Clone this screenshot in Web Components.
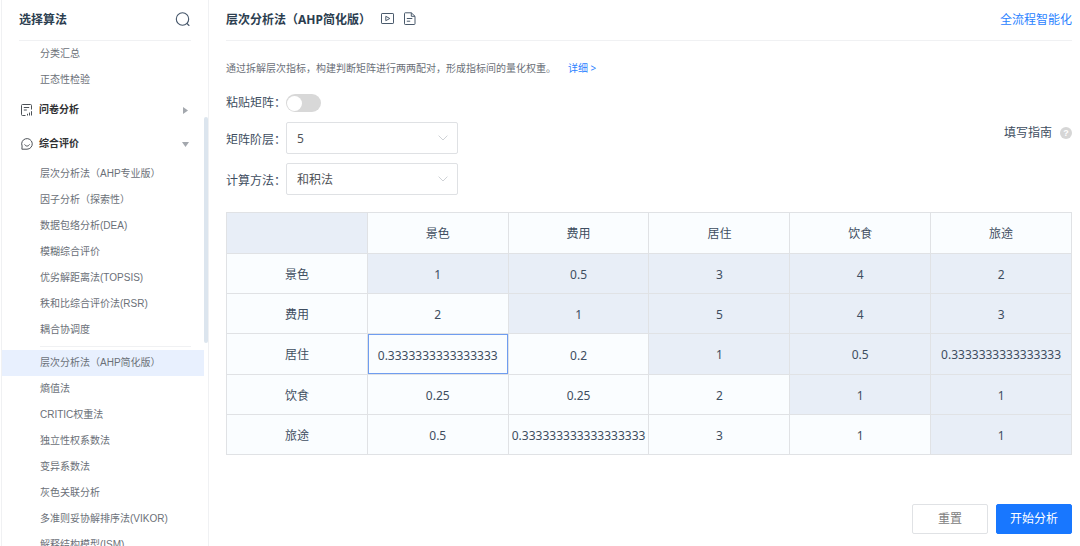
<!DOCTYPE html>
<html lang="zh-CN">
<head>
<meta charset="utf-8">
<meta name="viewport" content="width=device-width, initial-scale=1">
<title>层次分析法（AHP简化版）</title>
<style>
  html, body { margin: 0; height: 100%; overflow: hidden; background: #fff; }
  body {
    font: 12px/18px "Noto Sans", "Noto Sans CJK SC", sans-serif;
    color: #3e4d60;
    --line: #f0f1f3;
    --blue: #1877ff;
    --ink: #2c3e50;
  }
</style>
</head>
<body>
<app-shell>
  <algo-sidebar slot="side" heading="选择算法">
    <nav-item>分类汇总</nav-item>
    <nav-item>正态性检验</nav-item>
    <nav-group icon="survey">问卷分析</nav-group>
    <nav-group icon="rate" open>综合评价</nav-group>
    <nav-item>层次分析法（AHP专业版）</nav-item>
    <nav-item>因子分析（探索性）</nav-item>
    <nav-item>数据包络分析(DEA)</nav-item>
    <nav-item>模糊综合评价</nav-item>
    <nav-item>优劣解距离法(TOPSIS)</nav-item>
    <nav-item>秩和比综合评价法(RSR)</nav-item>
    <nav-item>耦合协调度</nav-item>
    <nav-divider></nav-divider>
    <nav-item active>层次分析法（AHP简化版）</nav-item>
    <nav-item>熵值法</nav-item>
    <nav-item>CRITIC权重法</nav-item>
    <nav-item>独立性权系数法</nav-item>
    <nav-item>变异系数法</nav-item>
    <nav-item>灰色关联分析</nav-item>
    <nav-item>多准则妥协解排序法(VIKOR)</nav-item>
    <nav-item>解释结构模型(ISM)</nav-item>
  </algo-sidebar>
  <page-header link="全流程智能化">层次分析法（AHP简化版）</page-header>
  <page-intro link="详细 &gt;">通过拆解层次指标，构建判断矩阵进行两两配对，形成指标间的量化权重。</page-intro>
  <options-bar>
    <toggle-field label="粘贴矩阵："></toggle-field>
    <select-field label="矩阵阶层：" options="5,3,4,6,7,8"></select-field>
    <select-field label="计算方法：" options="和积法,方根法"></select-field>
    <help-hint slot="aside">填写指南</help-hint>
  </options-bar>
  <judge-matrix></judge-matrix>
  <action-bar>
    <action-button>重置</action-button>
    <action-button primary>开始分析</action-button>
  </action-bar>
</app-shell>

<script>
const define = (name, render) => customElements.define(name, class extends HTMLElement {
  connectedCallback() {
    if (this.shadowRoot) return;
    const t = document.createElement('template');
    t.innerHTML = render(this);
    this.attachShadow({ mode: 'open' }).append(t.content.cloneNode(true));
  }
});

define('app-shell', () => `
  <style>
    :host { display: flex; height: 100vh; overflow: hidden; }
    main { flex: 1; min-width: 0; display: flex; flex-direction: column; padding: 0 8px 0 17px; }
  </style>
  <slot name="side"></slot>
  <main><slot></slot></main>`);

define('algo-sidebar', el => `
  <style>
    :host { display: flex; flex-direction: column; position: relative; flex: 0 0 206px; margin-left: 1px;
      border: solid var(--line); border-width: 0 1px; }
    header { flex: none; display: flex; align-items: center; justify-content: space-between; height: 40px;
      margin: 0 17px; border-bottom: 1px solid var(--line); }
    h2 { margin: 0; font-size: 12px; line-height: 18px; font-weight: 700; color: var(--ink); }
    button { border: 0; padding: 0; background: none; display: flex; }
    nav { flex: 1; min-height: 0; overflow: hidden; padding: 0 4px 0 0;
      font: 10px/26px "Liberation Sans", "Noto Sans CJK SC", sans-serif; }
    .thumb { position: absolute; right: 0; top: 117px; width: 4px; height: 226px; border-radius: 2px; background: #dce5ee; }
  </style>
  <header>
    <h2>${el.getAttribute('heading')}</h2>
    <button type="button" aria-label="搜索">
      <svg width="16" height="16" viewBox="0 0 16 16" fill="none" stroke="#45566a" stroke-width="1.1" stroke-linecap="round">
        <circle cx="7.500" cy="7" r="6.200"/><path d="M12 11.500l2 2"/>
      </svg>
    </button>
  </header>
  <nav><slot></slot></nav>
  <div class="thumb"></div>`);

define('nav-item', el => `
  <style>
    :host { display: block; height: 26px; }
    :host([active]) { background: #e8f0fe; }
    a { display: block; padding-left: 38px; color: #6b7078; text-decoration: none; white-space: nowrap; }
  </style>
  <a href="#"${el.hasAttribute('active') ? ' aria-current="page"' : ''}><slot></slot></a>`);

define('nav-divider', () => `
  <style>:host { display: block; height: 1px; margin: 3px 13px 3px 38px; background: var(--line); }</style>`);

const groupIcons = {
  survey: '<path d="M10.5 5.5v-4a1 1 0 0 0-1-1h-8a1 1 0 0 0-1 1v9a1 1 0 0 0 1 1h3M2.8 3.5h5.4M2.8 6h3M6.5 11.5V9.8M8.5 11.5V8.6M10.5 11.5V7.2"/>',
  rate: '<path d="M.9 11.2H6a5.3 5.3 0 1 0-4.9-3.2L.9 11.2zM3.6 6.4c.9 2.2 3.9 2.2 4.9 0"/>'
};
define('nav-group', el => `
  <style>
    :host { display: block; }
    button { display: flex; align-items: center; gap: 6px; width: 100%; height: 34px; padding: 0 15px 0 19px;
      border: 0; background: none; font: 700 10px/18px "Liberation Sans", "Noto Sans CJK SC", sans-serif;
      color: #303133; text-align: left; }
    span { flex: 1; }
    svg { flex: none; display: block; }
  </style>
  <button type="button" aria-expanded="${el.hasAttribute('open')}">
    <svg width="12" height="12" viewBox="0 0 12 12" fill="none" stroke="#4d5258">${groupIcons[el.getAttribute('icon')]}</svg>
    <span><slot></slot></span>
    <svg width="7" height="7" viewBox="0 0 7 7" fill="#a4a8ae">
      <path d="${el.hasAttribute('open') ? 'M0 1h7L3.5 6z' : 'M1 0v7L6 3.500z'}"/>
    </svg>
  </button>`);

define('page-header', el => `
  <style>
    :host { flex: none; display: flex; align-items: center; height: 40px; border-bottom: 1px solid var(--line); }
    h1 { margin: 0 10px 0 0; font-size: 12px; line-height: 18px; font-weight: 700; color: var(--ink); }
    .icon { display: flex; border: 0; padding: 0 0 2px; margin-right: 9px; background: none; }
    .link { margin-left: auto; color: #2a82ff; text-decoration: none; }
  </style>
  <h1><slot></slot></h1>
  <button class="icon" type="button" aria-label="视频教程">
    <svg width="14" height="14" viewBox="0 0 14 14" fill="none" stroke="#4a5a6c"><rect x=".5" y="1.500" width="12" height="10" rx=".6"/><path d="M4.800 4.300v4.400L8.800 6.500z"/></svg>
  </button>
  <button class="icon" type="button" aria-label="帮助文档">
    <svg width="12" height="14" viewBox="0 0 12 14" fill="none" stroke="#4a5a6c"><path d="M7.300.8H1.200a.7.7 0 0 0-.7.7v10.300a.7.7 0 0 0 .7.7h9.100a.7.7 0 0 0 .7-.7V4.300zM7.300.8v3.500H11M2.800 6.500h5.500M2.800 9.200h3.400"/></svg>
  </button>
  <a class="link" href="#">${el.getAttribute('link')}</a>`);

define('page-intro', el => `
  <style>
    :host { flex: none; display: flex; gap: 12px; margin-top: 18px; font-size: 10px; line-height: 18px; color: #6b7078; }
    a { color: #2a82ff; text-decoration: none; }
  </style>
  <span><slot></slot></span><a href="#">${el.getAttribute('link').replace('>', '&gt;')}</a>`);

define('options-bar', () => `
  <style>
    :host { flex: none; display: flex; justify-content: space-between; align-items: flex-start; margin-top: 17px; }
    .fields { display: grid; gap: 9px; }
    .aside { padding-top: 30px; }
  </style>
  <div class="fields"><slot></slot></div>
  <div class="aside"><slot name="aside"></slot></div>`);

define('toggle-field', el => `
  <style>
    :host { display: flex; align-items: flex-start; height: 19px; }
    label { width: 60px; white-space: nowrap; }
    input { appearance: none; display: flex; align-items: center; width: 35px; height: 18px; margin: 0;
      padding: 0 1px; box-sizing: border-box; border-radius: 9px; background: #d8d8d8; }
    input::before { content: ""; width: 15px; height: 15px; border-radius: 50%; background: #fff; }
    input:checked { justify-content: flex-end; background: var(--blue); }
  </style>
  <label for="c">${el.getAttribute('label')}</label><input id="c" type="checkbox" role="switch">`);

define('select-field', el => `
  <style>
    :host { display: flex; align-items: center; height: 32px; }
    label { width: 60px; padding-top: 4px; white-space: nowrap; }
    .box { display: grid; align-items: center; width: 172px; }
    select, svg { grid-area: 1 / 1; }
    select { appearance: none; width: 100%; height: 32px; padding: 2px 28px 0 10px; border: 1px solid #dfe1e4;
      border-radius: 2px; background: #fff; color: #505357; font: inherit; }
    svg { justify-self: end; margin-right: 10px; pointer-events: none; }
  </style>
  <label for="s">${el.getAttribute('label')}</label>
  <div class="box">
    <select id="s">${el.getAttribute('options').split(',').map(o => `<option>${o}</option>`).join('')}</select>
    <svg width="10" height="6" viewBox="0 0 10 6" fill="none" stroke="#cfd2d6"><path d="M.6.6L5 5 9.400.6"/></svg>
  </div>`);

define('help-hint', () => `
  <style>
    :host { display: flex; align-items: center; gap: 8px; }
    button { width: 12px; height: 12px; padding: 0; border: 0; border-radius: 50%; background: #d6d6d6;
      color: #fff; font: 700 9px/12px "Liberation Sans", sans-serif; }
  </style>
  <span><slot></slot></span><button type="button" aria-label="帮助">?</button>`);

const names = ['景色', '费用', '居住', '饮食', '旅途'];
const values = [
  ['1', '0.5', '3', '4', '2'],
  ['2', '1', '5', '4', '3'],
  ['0.3333333333333333', '0.2', '1', '0.5', '0.3333333333333333'],
  ['0.25', '0.25', '2', '1', '1'],
  ['0.5', '0.333333333333333333', '3', '1', '1']
];
define('judge-matrix', () => `
  <style>
    :host { display: block; flex: none; margin-top: 17px; }
    table { width: 100%; table-layout: fixed; border-collapse: collapse; text-align: center; }
    th, td { box-sizing: border-box; height: 40px; padding: 2px 0 0; border: 1px solid #e0e2e5;
      background: #fafdff; font-weight: 400; }
    thead td, thead th { height: 41px; }
    .fixed { background: #e8eef7; }
    .cell { padding: 0; }
    input { display: block; box-sizing: border-box; width: 100%; height: 39px; margin: 0; padding: 2px 0 0;
      border: 1px solid transparent; background: none; color: inherit; font: inherit; text-align: center; outline: 0; }
    .current { height: 40px; border-color: #6f9df0; }
  </style>
  <table>
    <thead><tr><td class="fixed"></td>${names.map(n => `<th scope="col">${n}</th>`).join('')}</tr></thead>
    <tbody>${values.map((row, r) => `<tr><th scope="row">${names[r]}</th>${row.map((v, c) => c < r
      ? `<td class="cell"><input type="text"${r === 2 && c === 0 ? ' class="current"' : ''} aria-label="${names[r]} / ${names[c]}" value="${v}"></td>`
      : `<td class="fixed">${v}</td>`).join('')}</tr>`).join('')}</tbody>
  </table>`);

define('action-bar', () => `
  <style>:host { flex: none; display: flex; justify-content: flex-end; gap: 8px; margin-top: 49px; }</style>
  <slot></slot>`);

define('action-button', () => `
  <style>
    :host { display: block; }
    button { display: block; width: 76px; height: 30px; padding: 0; border: 1px solid #e0e2e5; border-radius: 2px;
      background: #fff; color: #808080; font: inherit; }
    :host([primary]) button { border-color: var(--blue); background: var(--blue); color: #fff; }
  </style>
  <button type="button"><slot></slot></button>`);
</script>
</body>
</html>
